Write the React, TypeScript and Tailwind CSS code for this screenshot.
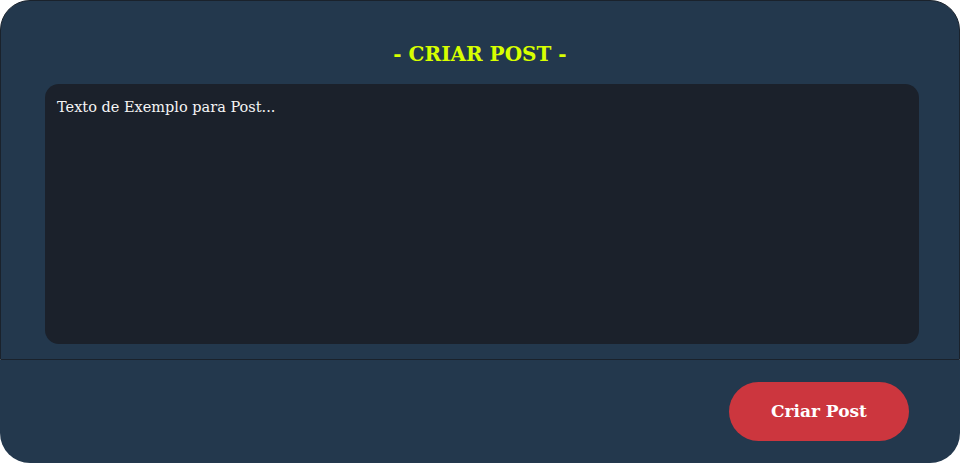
export default function App() {
  const font = { fontFamily: '"Roboto Slab", "DejaVu Serif", serif' };

  return (
    <div className="w-[960px] h-[463px] bg-white" style={font}>
      {/* Card superior com título e área de texto */}
      <section className="h-[360px] bg-[#23384d] border border-[#1a222c] rounded-t-[30px] flex flex-col">
        <h1 className="text-center text-[20px] leading-none font-bold text-[#d8ff00] pt-[43px] pb-[20px]">
          - CRIAR POST -
        </h1>
        <div className="ml-[44px] w-[874px] h-[260px] bg-[#1b212b] rounded-[14px] px-3 py-[13px]">
          <p className="text-[14.5px] leading-5 text-[#f5f5f5]">Texto de Exemplo para Post...</p>
        </div>
      </section>

      {/* Rodapé com botão */}
      <footer className="h-[103px] bg-[#23384d] rounded-b-[30px] flex items-center justify-end pr-[51px]">
        <button className="w-[180px] h-[59px] rounded-full bg-[#cc363e] text-white text-[17px] font-bold">
          Criar Post
        </button>
      </footer>
    </div>
  );
}
